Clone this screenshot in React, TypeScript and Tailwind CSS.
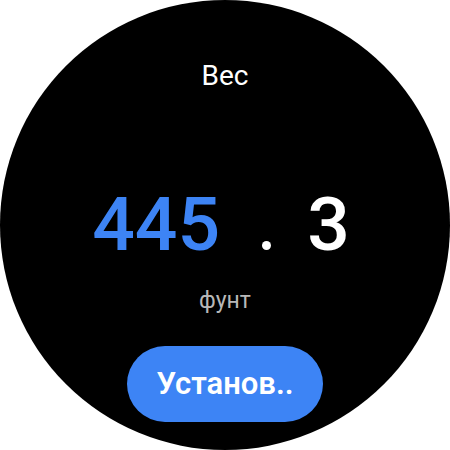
export default function App() {
  return (
    <div className="w-[450px] h-[450px] bg-white font-['Roboto',sans-serif]">
      <div className="w-[450px] h-[450px] rounded-full bg-black flex flex-col items-center">
        <div className="mt-[62px] text-[28px] leading-none text-white">Вес</div>
        <div className="mt-[97px] mr-[8px] flex items-baseline text-[75px] leading-none font-medium">
          <span className="text-[#3d84f5]">445</span>
          <div className="ml-[42px] mr-[36px] w-[9px] h-[9px] mb-[1px] rounded-full bg-white" />
          <span className="text-white">3</span>
        </div>
        <div className="mt-[27px] text-[23px] leading-none text-[#b8b8b8]">фунт</div>
        <button className="mt-[34px] w-[196px] h-[76px] rounded-full bg-[#3d84f5] text-white text-[31px] font-semibold">
          Установ..
        </button>
      </div>
    </div>
  )
}
